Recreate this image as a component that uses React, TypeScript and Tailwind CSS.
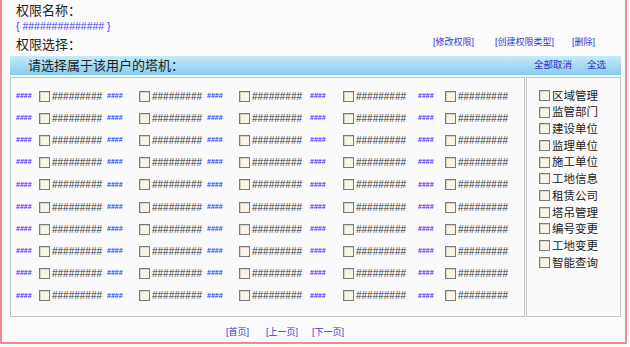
import React from "react";

const cols = [
  { w: "w-[91px]", b: "w-[23px]" },
  { w: "w-[100px]", b: "w-[32px]" },
  { w: "w-[103px]", b: "w-[32px]" },
  { w: "w-[108px]", b: "w-[33px]" },
  { w: "w-[100px]", b: "w-[27px]" },
];

const rights = [
  "区域管理",
  "监管部门",
  "建设单位",
  "监理单位",
  "施工单位",
  "工地信息",
  "租赁公司",
  "塔吊管理",
  "编号变更",
  "工地变更",
  "智能查询",
];

const Box = () => (
  <span className="inline-block w-[11px] h-[11px] shrink-0 border border-[#7a7a7a] bg-[#f8f5e8] shadow-[inset_1px_1px_0_#d8d4c4]" />
);

const App = () => {
  return (
    <div className="w-[630px] h-[347px] bg-[#fbfbfb] font-['Liberation_Sans','Noto_Sans_CJK_SC',sans-serif]">
      <div className="w-[627px] h-[344px] border-l-2 border-r-2 border-b-2 border-[#f28b8b] flex flex-col">
        <div className="pl-[14px] pt-[1px] h-[19px] text-[13px] leading-[19px] text-[#222]">权限名称：</div>
        <div className="pl-[14px] h-[15px] text-[10.5px] leading-[15px] text-[#3b3bff]">
          {"{ ############## }"}
        </div>
        <div className="flex items-center h-[21px] pr-[30px]">
          <div className="pl-[14px] text-[13px] text-[#222] flex-1">权限选择：</div>
          <div className="flex text-[9px] text-[#3535cc] gap-[21px] mt-[-3px]">
            <span className="ml-[-3px]">[修改权限]</span>
            <span>[创建权限类型]</span>
            <span className="ml-[-3px]">[删除]</span>
          </div>
        </div>
        <div className="ml-[8px] w-[611px] h-[19px] mt-[1px] flex items-center bg-gradient-to-b from-[#c6eaf9] to-[#86ccee]">
          <span className="pl-[18px] text-[13px] text-[#1e1e1e] flex-1">请选择属于该用户的塔机：</span>
          <span className="text-[9.5px] text-[#2f2fd0] mr-[15px]">全部取消</span>
          <span className="text-[9.5px] text-[#2f2fd0] mr-[15px]">全选</span>
        </div>
        <div className="ml-[8px] w-[611px] h-[240px] mt-[2px] flex gap-[1px]">
          <div className="w-[515px] h-full border border-[#c4c4c4] bg-[#fafafa] pt-[7px]">
            {Array.from({ length: 10 }).map((_, r) => (
              <div key={r} className="flex h-[22.2px] items-center pl-[5px]">
                {cols.map((c, i) => (
                  <div key={i} className={`${c.w} flex items-center`}>
                    <span className={`${c.b} text-[7px] font-bold text-[#3333ff]`}>####</span>
                    <Box />
                    <span className="ml-[2px] text-[10px] text-[#333]">#########</span>
                  </div>
                ))}
              </div>
            ))}
          </div>
          <div className="w-[95px] h-full border border-[#c4c4c4] bg-[#fafafa] pt-[9px] pl-[12px]">
            {rights.map((t) => (
              <div key={t} className="flex items-center h-[16.7px] gap-[2px]">
                <Box />
                <span className="text-[11.5px] text-[#222] font-['Noto_Sans_CJK_SC',sans-serif]">{t}</span>
              </div>
            ))}
          </div>
        </div>
        <div className="flex gap-[17px] text-[9px] text-[#3535cc] mt-[9px] pl-[224px]">
          <span>[首页]</span>
          <span>[上一页]</span>
          <span className="ml-[-3px]">[下一页]</span>
        </div>
      </div>
    </div>
  );
};

export default App;
